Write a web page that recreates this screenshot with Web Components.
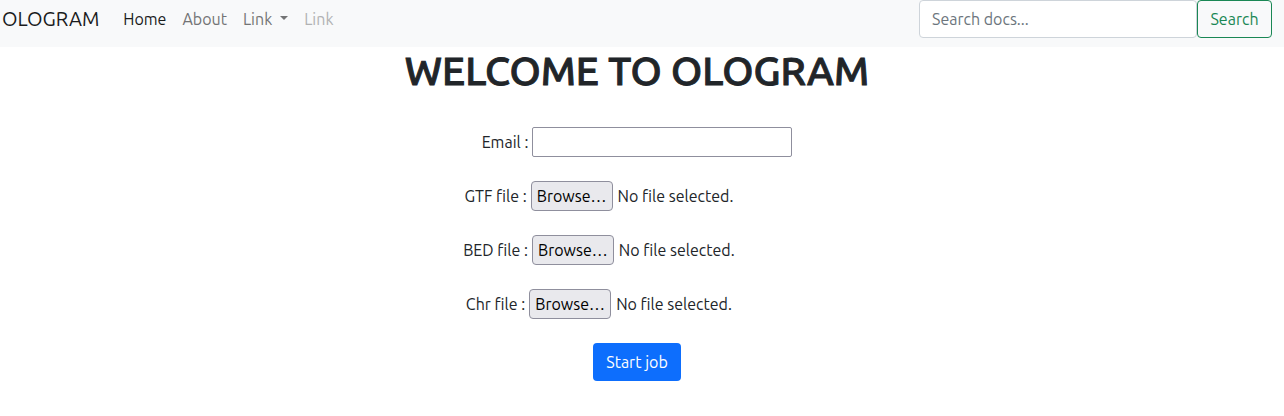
<!DOCTYPE html>
<html lang="en">
<head>
<meta charset="utf-8">
<meta name="viewport" content="width=device-width, initial-scale=1">
<title>OLOGRAM</title>
<style>
body { margin: 0; background: #fff; color: #212529; font: 16px/24px Ubuntu, "Noto Sans", sans-serif; }
</style>
</head>
<body>
<ologram-navbar>
  <nav-item current>Home</nav-item>
  <nav-item>About</nav-item>
  <nav-item dropdown>Link</nav-item>
  <nav-item disabled>Link</nav-item>
  <search-form slot="end"></search-form>
</ologram-navbar>
<job-form>
  <span slot="title">WELCOME TO OLOGRAM</span>
  <email-field>Email :</email-field>
  <file-field>GTF file :</file-field>
  <file-field>BED file :</file-field>
  <file-field>Chr file :</file-field>
</job-form>
<script>
class BaseElement extends HTMLElement {
  constructor() {
    super();
    this.attachShadow({ mode: "open" }).innerHTML =
      `<style>*, :host { box-sizing: border-box } input, button { font: inherit; margin: 0 }</style>` + this.constructor.markup;
  }
}

customElements.define("ologram-navbar", class extends BaseElement {
  static markup = `
    <style>
      :host { display: block; background: #f8f9fa }
      nav { display: flex; align-items: center; padding: 0 12px 9px 2px }
      .brand { font-size: 20px; line-height: 30px; color: #1a1b1c; text-decoration: none; margin-right: 16px }
      .links { display: flex; flex: 1 }
    </style>
    <nav aria-label="Main">
      <a class="brand" href="#">OLOGRAM</a>
      <div class="links"><slot></slot></div>
      <slot name="end"></slot>
    </nav>`;
});

customElements.define("nav-item", class extends BaseElement {
  static markup = `
    <style>
      :host { display: block }
      a { display: flex; align-items: center; padding: 0 8px; color: #737475; text-decoration: none }
      :host([current]) a { color: #1a1b1c }
      :host([disabled]) a { color: #b1b2b3; pointer-events: none }
      :host([dropdown]) a::after { content: ""; margin: 0 0 2px 8px; border: 4px solid transparent; border-top-color: currentColor; border-bottom: 0 }
    </style>
    <a href="#"><slot></slot></a>`;
});

customElements.define("search-form", class extends BaseElement {
  static markup = `
    <style>
      :host { display: block }
      form { display: flex }
      input { width: 278px; height: 38px; padding: 6px 12px; border: 1px solid #ced4da; border-radius: 4px; background: #fff; color: #212529 }
      input::placeholder { color: #6c757d; opacity: 1 }
      button { height: 38px; min-width: 75px; padding: 0 8px; border: 1px solid #198754; border-radius: 4px; background: transparent; color: #198754 }
    </style>
    <form role="search">
      <input type="search" placeholder="Search docs..." aria-label="Search docs">
      <button type="button">Search</button>
    </form>`;
});

customElements.define("email-field", class extends BaseElement {
  static markup = `
    <style>
      :host { display: flex; align-items: center; gap: 4px }
      input { width: 260px; height: 30px; padding: 0 4px; border: 1px solid #8f8f9d; border-radius: 2px; background: #fff }
    </style>
    <label for="email"><slot></slot></label>
    <input id="email" type="email">`;
});

customElements.define("file-field", class extends BaseElement {
  static markup = `
    <style>
      :host { display: flex; align-items: center; gap: 4px }
      .picker { display: flex; align-items: center; gap: 5px; width: 279px; position: relative }
      input { position: absolute; width: 1px; height: 1px; opacity: 0; overflow: hidden; clip-path: inset(50%) }
      button { height: 30px; min-width: 82px; padding: 0 4px; border: 1px solid #8f8f9d; border-radius: 4px; background: #e9e9ed; color: #000 }
    </style>
    <label for="file"><slot></slot></label>
    <div class="picker">
      <input id="file" type="file" tabindex="-1">
      <button type="button">Browse…</button>
      <output for="file">No file selected.</output>
    </div>`;
  connectedCallback() {
    const input = this.shadowRoot.querySelector("input");
    this.shadowRoot.querySelector("button").onclick = () => input.click();
    input.onchange = () => {
      this.shadowRoot.querySelector("output").textContent = input.files[0]?.name ?? "No file selected.";
    };
  }
});

customElements.define("job-form", class extends BaseElement {
  static markup = `
    <style>
      :host { display: block; padding-right: 10px }
      h1 { margin: 0 0 32px; font-size: 40px; line-height: 48px; font-weight: 500; text-align: center; -webkit-text-stroke: 1px currentColor }
      form { display: flex; flex-direction: column; align-items: center; gap: 24px }
      button { height: 38px; min-width: 88px; padding: 0 12px; border: 0; border-radius: 4px; background: #0d6efd; color: #fff }
    </style>
    <h1><slot name="title"></slot></h1>
    <form>
      <slot></slot>
      <button type="button">Start job</button>
    </form>`;
});
</script>
</body>
</html>
